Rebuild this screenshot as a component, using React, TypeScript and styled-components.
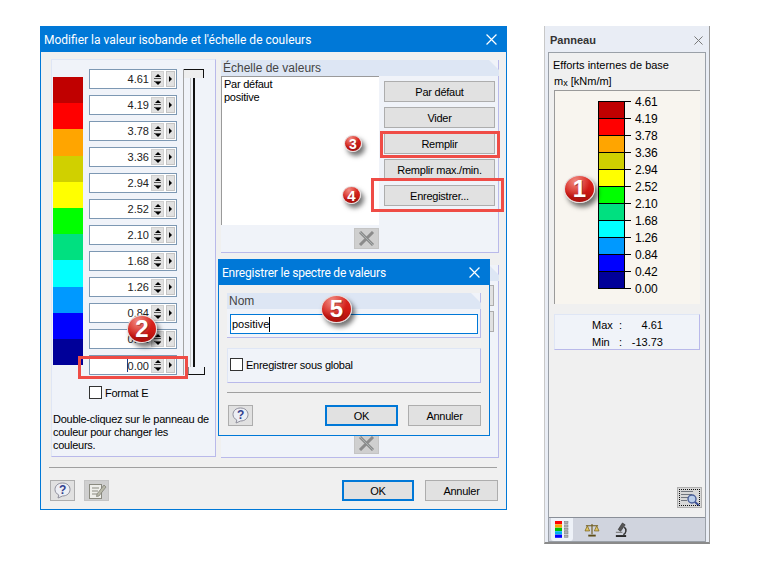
import React from "react";
import styled, { createGlobalStyle } from "styled-components";

const FONT = `"Liberation Sans", Arial, sans-serif`;
const CAPTION_FONT = `Roboto, "Liberation Sans", sans-serif`;
const BLUE = "#0078d7";

const SCALE = ["4.61", "4.19", "3.78", "3.36", "2.94", "2.52", "2.10", "1.68", "1.26", "0.84", "0.42", "0.00"];
const COLORS = ["#c00000", "#ff0000", "#ffa500", "#d0d000", "#ffff00", "#00ff00", "#00e080", "#00ffff", "#0099ff", "#0000ff", "#000099"];

const GlobalStyle = createGlobalStyle`
  html, body {
    margin: 0;
    background: #fff;
  }
  body {
    font-family: ${FONT};
    font-size: 11px;
    color: #000;
  }
`;

const Page = styled.div`
  position: relative;
  width: 760px;
  height: 573px;
  box-sizing: border-box;
  padding: 26px 0 0 40px;
  display: flex;
  align-items: flex-start;
  gap: 37px;
  overflow: hidden;
`;

const Dialog = styled.div`
  position: relative;
  box-sizing: border-box;
  width: 467px;
  height: 484px;
  border: 1px solid ${BLUE};
  background: #f0f0f0;
  letter-spacing: -0.25px;
`;

const SubDialog = styled(Dialog)`
  position: absolute;
  left: 177px;
  top: 232px;
  width: 272px;
  height: 177px;
`;

const TitleBar = styled.div`
  height: 25px;
  background: ${BLUE};
  color: #fff;
  font-family: ${CAPTION_FONT};
  font-size: 12px;
  letter-spacing: 0;
  display: flex;
  align-items: center;
  justify-content: space-between;
  padding: 0 9px 0 3px;
`;

const SubTitleBar = styled(TitleBar)`
  letter-spacing: -0.2px;
`;

const DialogBody = styled.div`
  padding: 7px 7px 0 10px;
`;

const Columns = styled.div`
  display: flex;
  gap: 5px;
`;

const ScalePanel = styled.div`
  box-sizing: border-box;
  width: 165px;
  height: 398px;
  padding: 9px 2px 0 1px;
  background: #f0f3f9;
  border-right: 1px solid #b9b9ea;
  border-bottom: 1px solid #b9b9ea;
  border-top: 1px solid #dfe6f5;
  border-left: 1px solid #dfe6f5;
`;

const ScaleRow = styled.div`
  display: flex;
  align-items: flex-start;
`;

const ColorStack = styled.div`
  width: 30px;
  margin: 8px 6px 0 0;
  display: flex;
  flex-direction: column;
`;

const ColorCell = styled.div<{ $color: string }>`
  height: 26.2px;
  background: ${(p) => p.$color};
`;

const ValueList = styled.div`
  display: flex;
  flex-direction: column;
  gap: 6px;
  margin-right: 6px;
`;

const ValueField = styled.div`
  box-sizing: border-box;
  width: 88px;
  height: 20px;
  border: 1px solid #7d98b3;
  background: #fff;
  display: flex;
  align-items: center;
  padding-right: 1px;
  gap: 2px;
`;

const ValueText = styled.span`
  flex: 1;
  text-align: right;
  letter-spacing: 0;
  color: #222;
`;

const ValueCaret = styled.i`
  display: inline-block;
  width: 1px;
  height: 13px;
  vertical-align: -2px;
  background: #1a3f8a;
`;

const SpinBox = styled.div`
  box-sizing: border-box;
  width: 13px;
  height: 16px;
  background: #e1e1e1;
  border: 1px solid #d0d0d0;
  display: flex;
  flex-direction: column;
  align-items: center;
  justify-content: center;
`;

const SpinUp = styled.i`
  width: 0;
  height: 0;
  border-left: 3px solid transparent;
  border-right: 3px solid transparent;
  border-bottom: 3px solid #000;
`;

const SpinDown = styled.i`
  width: 0;
  height: 0;
  border-left: 3px solid transparent;
  border-right: 3px solid transparent;
  border-top: 3px solid #000;
`;

const SpinRule = styled.i<{ $gap: number }>`
  width: 7px;
  height: 1px;
  margin-top: ${(p) => p.$gap}px;
  background: #555;
`;

const NextBox = styled.div`
  box-sizing: border-box;
  width: 9px;
  height: 16px;
  background: #e1e1e1;
  border: 1px solid #c4c4c4;
  display: flex;
  align-items: center;
  justify-content: center;
`;

const NextArrow = styled.i`
  width: 0;
  height: 0;
  border-top: 3px solid transparent;
  border-bottom: 3px solid transparent;
  border-left: 3px solid #000;
`;

const SliderTrack = styled.div`
  position: relative;
  box-sizing: border-box;
  width: 21px;
  height: 306px;
  border-left: 1px solid #a3a3a3;

  &::before {
    content: "";
    position: absolute;
    left: 6px;
    top: 0;
    bottom: 0;
    width: 1px;
    background: #c4c4c4;
  }

  &::after {
    content: "";
    position: absolute;
    left: 9px;
    top: 0;
    bottom: 0;
    width: 2px;
    background: #111;
  }
`;

const SliderTop = styled.div`
  position: absolute;
  z-index: 1;
  left: 0;
  top: 0;
  width: 19px;
  height: 8px;
  background: #eeeeee;
  border-top: 1px solid #111;
  border-right: 1px solid #111;
`;

const SliderBottom = styled.div`
  position: absolute;
  z-index: 1;
  left: 4px;
  bottom: 0;
  width: 15px;
  height: 7px;
  background: #f0f3f9;
  border-bottom: 1px solid #111;
  border-right: 1px solid #111;
  border-left: 1px solid #888;
`;

const CheckRow = styled.label<{ $left: number; $top: number }>`
  display: flex;
  align-items: center;
  gap: 3px;
  margin: ${(p) => `${p.$top}px 0 0 ${p.$left}px`};
`;

const CheckBox = styled.span`
  box-sizing: border-box;
  width: 13px;
  height: 13px;
  border: 1px solid #333;
  background: #fff;
`;

const Hint = styled.p`
  margin: 14px 0 0;
  line-height: 13px;
`;

const RightColumn = styled.div`
  width: 278px;
  margin-top: 1px;
  display: flex;
  flex-direction: column;
  gap: 12px;
`;

const Group = styled.div<{ $height: number }>`
  box-sizing: border-box;
  height: ${(p) => p.$height}px;
  background: #f0f3f9;
  border-right: 1px solid #b9b9ea;
  border-bottom: 1px solid #b9b9ea;
`;

const GroupHeader = styled.div`
  height: 16px;
  margin-right: -1px;
  background: #dde6f4;
  color: #444;
  padding-left: 2px;
  font-size: 12px;
  letter-spacing: 0;
  line-height: 16px;
  clip-path: polygon(0 0, calc(100% - 10px) 0, 100% 10px, 100% 100%, 0 100%);
`;

const GroupRow = styled.div`
  display: flex;
`;

const ListColumn = styled.div`
  width: 158px;
  display: flex;
  flex-direction: column;
  align-items: flex-end;
  margin-right: 5px;
`;

const ListBox = styled.div`
  box-sizing: border-box;
  width: 100%;
  height: 149px;
  background: #fff;
  border-top: 1px solid #9a9a9a;
  border-left: 1px solid #9a9a9a;
  padding: 1px 2px;
  line-height: 13px;
`;

const ButtonColumn = styled.div`
  display: flex;
  flex-direction: column;
  gap: 5px;
  margin-top: 5px;
`;

const Button = styled.div<{ $width?: number; $primary?: boolean }>`
  box-sizing: border-box;
  width: ${(p) => p.$width ?? 111}px;
  height: 21px;
  background: #e1e1e1;
  border: ${(p) => (p.$primary ? `2px solid ${BLUE}` : "1px solid #adadad")};
  display: flex;
  align-items: center;
  justify-content: center;
`;

const IconButton = styled.div<{ $muted?: boolean; $top?: number }>`
  box-sizing: border-box;
  width: 25px;
  height: 21px;
  margin-top: ${(p) => p.$top ?? 0}px;
  background: ${(p) => (p.$muted ? "#cfcfcf" : "#e1e1e1")};
  border: 1px solid ${(p) => (p.$muted ? "#c4c4c4" : "#adadad")};
  display: flex;
  align-items: center;
  justify-content: center;
  flex: none;
`;

const HiddenGroupRow = styled.div`
  height: 176px;
  display: flex;
  justify-content: space-between;
`;

const StubColumn = styled.div`
  width: 111px;
  margin-left: auto;
  margin-right: 4px;
  display: flex;
  flex-direction: column;
  gap: 5px;
  margin-top: 4px;
`;

const LowerListEnd = styled.div`
  width: 158px;
  margin-top: 152px;
  display: flex;
  justify-content: flex-end;
`;

const Separator = styled.div`
  height: 1px;
  background: #a0a0a0;
`;

const MainSeparator = styled(Separator)`
  margin: 9px 2px 0 -2px;
`;

const Footer = styled.div`
  display: flex;
  align-items: center;
  margin: 12px 1px 0 -1px;
  gap: 9px;
`;

const FooterSpacer = styled.div`
  flex: 1;
`;

const FooterActions = styled.div`
  display: flex;
  gap: 11px;
`;

const SubBody = styled.div`
  padding: 8px 8px 0;
`;

const NameGroup = styled.div`
  box-sizing: border-box;
  height: 45px;
  background: #f0f3f9;
  border-right: 1px solid #b9b9ea;
  border-bottom: 1px solid #b9b9ea;
`;

const NameField = styled.div`
  box-sizing: border-box;
  width: 248px;
  height: 20px;
  margin: 5px 0 0 3px;
  padding-left: 1px;
  background: #fff;
  border: 1px solid ${BLUE};
  display: flex;
  align-items: center;
  letter-spacing: 0;
`;

const Caret = styled.i`
  width: 1px;
  height: 15px;
  background: #000;
`;

const GlobalGroup = styled.div`
  box-sizing: border-box;
  height: 35px;
  margin-top: 10px;
  padding-top: 1px;
  background: #f0f3f9;
  border: 1px solid #dfe6f5;
  border-right-color: #b9b9ea;
  border-bottom-color: #b9b9ea;
`;

const SubSeparator = styled(Separator)`
  margin-top: 9px;
`;

const SubFooter = styled(Footer)`
  margin: 12px 0 0 1px;
`;

const SubActions = styled(FooterActions)`
  gap: 10px;
`;

const SidePanel = styled.div`
  box-sizing: border-box;
  width: 166px;
  height: 518px;
  padding: 0 3px 0 3px;
  background: #e9edf5;
  border-left: 1px solid #c8c8c8;
  border-right: 1px solid #9a9a9a;
  border-bottom: 2px solid #8a8a8a;
  display: flex;
  flex-direction: column;
`;

const SideHeader = styled.div`
  height: 26px;
  display: flex;
  align-items: center;
  justify-content: space-between;
  padding: 2px 3px 0 2px;
  box-sizing: border-box;
  font-size: 11px;
  font-weight: bold;
  color: #333;
`;

const SideBody = styled.div`
  flex: 1;
  background: #f0f0f0;
  border: 1px solid #9aa0a8;
  padding: 4px 5px 0;
  display: flex;
  flex-direction: column;
`;

const SideTitle = styled.div`
  line-height: 16px;
  margin-left: -1px;
`;

const SideUnit = styled.div`
  line-height: 17px;

  sub {
    font-size: 9px;
    line-height: 0;
    vertical-align: -1px;
  }
`;

const LegendBox = styled.div`
  box-sizing: border-box;
  height: 214px;
  padding: 10px 0 0 43px;
  background: #f8f5ef;
  border-top: 1px solid #9a9a9a;
  border-left: 1px solid #9a9a9a;
  display: flex;
  align-items: flex-start;
`;

const LegendBar = styled.div`
  box-sizing: border-box;
  width: 27px;
  border: 1px solid #000;
  border-bottom-width: 0;
`;

const LegendCell = styled.div<{ $color: string }>`
  box-sizing: border-box;
  height: 17px;
  background: ${(p) => p.$color};
  border-bottom: 1px solid #000;
`;

const LegendLabels = styled.div`
  margin-top: -8px;
`;

const LegendLabel = styled.div`
  height: 17px;
  display: flex;
  align-items: center;
  font-size: 12px;
  letter-spacing: -0.2px;

  &::before {
    content: "";
    width: 6px;
    height: 1px;
    margin-right: 4px;
    background: #000;
  }
`;

const Extremes = styled.div`
  box-sizing: border-box;
  height: 36px;
  margin-top: 10px;
  padding: 1px 0 0 37px;
  background: #f0f3f9;
  border: 1px solid #dfe6f5;
  border-right-color: #b9b9ea;
  border-bottom-color: #b9b9ea;
  display: grid;
  grid-template-columns: 27px 8px 36px;
  grid-auto-rows: 17px;
  align-items: center;
`;

const ExtremeValue = styled.span`
  text-align: right;
`;

const SideSpacer = styled.div`
  flex: 1;
`;

const FindButton = styled.div`
  box-sizing: border-box;
  width: 25px;
  height: 21px;
  margin: 0 -2px 9px auto;
  background: #d8d8d8;
  border: 1px solid #b0b0b0;
  outline: 1px dotted #111;
  outline-offset: -3px;
  display: flex;
  align-items: center;
  justify-content: center;
`;

const TabBar = styled.div`
  height: 23px;
  background: #d0d4de;
  border-top: 1px solid #8a8f98;
  margin: 0 -5px;
  display: flex;
  align-items: center;
  padding-left: 2px;
  gap: 7.5px;
`;

const Tab = styled.div<{ $active?: boolean }>`
  width: 22px;
  height: 23px;
  background: ${(p) => (p.$active ? "#eef2f8" : "transparent")};
  border-radius: 0 0 3px 3px;
  display: flex;
  align-items: center;
  justify-content: center;
`;

const Highlight = styled.div<{ $x: number; $y: number; $w: number; $h: number }>`
  position: absolute;
  box-sizing: border-box;
  left: ${(p) => p.$x}px;
  top: ${(p) => p.$y}px;
  width: ${(p) => p.$w}px;
  height: ${(p) => p.$h}px;
  border: 3px solid #ef4c46;
`;

const Badge = styled.div<{ $x: number; $y: number; $w: number; $h: number }>`
  position: absolute;
  box-sizing: border-box;
  left: ${(p) => p.$x}px;
  top: ${(p) => p.$y}px;
  width: ${(p) => p.$w}px;
  height: ${(p) => p.$h}px;
  border-radius: 50%;
  border: 1.5px solid #e6dcdc;
  background:
    radial-gradient(ellipse at 35% 20%, #f08a80 0%, rgba(240, 138, 128, 0) 55%),
    linear-gradient(#dc2a22, #d01a14 55%, #a80f0c);
  box-shadow: 3px 4px 5px rgba(0, 0, 0, 0.55);
  color: #fff;
  font-family: ${FONT};
  font-weight: bold;
  font-size: ${(p) => Math.round(p.$h * 0.85)}px;
  text-shadow: 1px 1px 0 rgba(130, 30, 30, 0.6);
  display: flex;
  align-items: center;
  justify-content: center;
  line-height: 1;
`;

function CloseIcon({ color = "#fff", size = 10 }: { color?: string; size?: number }) {
  return (
    <svg width={size} height={size} viewBox="0 0 10 10">
      <path d="M0.5 0.5 L9.5 9.5 M9.5 0.5 L0.5 9.5" stroke={color} strokeWidth="1.1" fill="none" />
    </svg>
  );
}

function HelpIcon() {
  return (
    <svg width="19" height="17" viewBox="0 0 19 17">
      <path d="M9.5 1 C14 1 17 3.8 17 7.5 C17 11.2 14 14 9.5 14 L5 16 L5.8 13 C3.4 11.8 2 9.8 2 7.5 C2 3.8 5 1 9.5 1 Z" fill="#eceef4" stroke="#8f8f9c" />
      <text x="9.5" y="12" textAnchor="middle" fontFamily={FONT} fontWeight="bold" fontSize="12" fill="#33408f">?</text>
    </svg>
  );
}

function NotesIcon() {
  return (
    <svg width="20" height="18" viewBox="0 0 20 18">
      <rect x="2.5" y="2.5" width="12" height="14" fill="#eeeeea" stroke="#8a8a80" />
      <path d="M5 6h7M5 9h6M5 12h5" stroke="#8a8a80" />
      <path d="M10 12 L17 3 L19 5 L12 14 L9.5 14.5 Z" fill="#b8b8a8" stroke="#7a7a70" strokeWidth="0.7" />
    </svg>
  );
}

function DeleteIcon() {
  return (
    <svg width="17" height="15" viewBox="0 0 17 15">
      <path d="M2 1 L15 14 M15 1 L2 14" stroke="#8b8b8b" strokeWidth="3" />
      <path d="M2 1 L15 14" stroke="#a9b0b0" strokeWidth="1" />
    </svg>
  );
}

function FindIcon() {
  return (
    <svg width="20" height="16" viewBox="0 0 20 16">
      <path d="M1 1.5h12M1 4.5h11M1 7.5h7M1 10.5h6" stroke="#70757d" />
      <circle cx="12" cy="9" r="4" fill="#b9cdea" stroke="#4a5f9a" strokeWidth="1.4" />
      <path d="M15 12 L19 15.5" stroke="#3c4f94" strokeWidth="2" />
    </svg>
  );
}

function BarsIcon() {
  const colors = ["#ff0000", "#ffa500", "#00c000", "#00b0f0", "#0000ff"];
  return (
    <svg width="14" height="17" viewBox="0 0 14 17">
      {colors.map((c, i) => (
        <g key={c}>
          <rect x="0" y={i * 3.4} width="7" height="3.2" fill={c} />
          <rect x="9.5" y={i * 3.4 + 0.5} width="3.5" height="2.2" fill="#b0b0b0" stroke="#777" strokeWidth="0.5" />
        </g>
      ))}
    </svg>
  );
}

function BalanceIcon() {
  return (
    <svg width="16" height="14" viewBox="0 0 17 15">
      <path d="M8.5 1v11M2 3h13" stroke="#6d5a1c" strokeWidth="1.2" />
      <path d="M3.5 3 L1 8.5h5Z M13.5 3 L11 8.5h5Z" fill="#e3c763" stroke="#7a6420" strokeWidth="0.8" />
      <path d="M4.5 13.5h8" stroke="#5c4c18" strokeWidth="2" />
    </svg>
  );
}

function MicroscopeIcon() {
  return (
    <svg width="14" height="17" viewBox="0 0 15 17">
      <path d="M9 1.5 L12 3.5 L7 10.5 L4.5 8.5 Z" fill="#555" stroke="#222" strokeWidth="0.6" />
      <path d="M11 6 C14 8.5 13 12.5 10 14" stroke="#333" strokeWidth="1.6" fill="none" />
      <path d="M2 15.5h11" stroke="#222" strokeWidth="2" />
      <path d="M2 11.5h7" stroke="#777" strokeWidth="1.2" />
    </svg>
  );
}

function ScaleField({ value, active }: { value: string; active?: boolean }) {
  return (
    <ValueField>
      <ValueText>
        {active && <ValueCaret />}
        {value}
      </ValueText>
      <SpinBox>
        <SpinUp />
        <SpinRule $gap={1} />
        <SpinRule $gap={2} />
        <SpinDown />
      </SpinBox>
      <NextBox>
        <NextArrow />
      </NextBox>
    </ValueField>
  );
}

export default function App() {
  return (
    <>
      <GlobalStyle />
      <Page>
        <Dialog>
          <TitleBar>
            Modifier la valeur isobande et l'échelle de couleurs
            <CloseIcon size={11} />
          </TitleBar>
          <DialogBody>
            <Columns>
              <ScalePanel>
                <ScaleRow>
                  <ColorStack>
                    {COLORS.map((c) => (
                      <ColorCell key={c} $color={c} />
                    ))}
                  </ColorStack>
                  <ValueList>
                    {SCALE.map((v) => (
                      <ScaleField key={v} value={v} active={v === "0.00"} />
                    ))}
                  </ValueList>
                  <SliderTrack>
                    <SliderTop />
                    <SliderBottom />
                  </SliderTrack>
                </ScaleRow>
                <CheckRow $left={36} $top={11}>
                  <CheckBox />
                  Format E
                </CheckRow>
                <Hint>
                  Double-cliquez sur le panneau de
                  <br />
                  couleur pour changer les
                  <br />
                  couleurs.
                </Hint>
              </ScalePanel>
              <RightColumn>
                <Group $height={193}>
                  <GroupHeader>Échelle de valeurs</GroupHeader>
                  <GroupRow>
                    <ListColumn>
                      <ListBox>
                        Par défaut
                        <br />
                        positive
                      </ListBox>
                      <IconButton $muted $top={3}>
                        <DeleteIcon />
                      </IconButton>
                    </ListColumn>
                    <ButtonColumn>
                      <Button>Par défaut</Button>
                      <Button>Vider</Button>
                      <Button>Remplir</Button>
                      <Button>Remplir max./min.</Button>
                      <Button>Enregistrer...</Button>
                    </ButtonColumn>
                  </GroupRow>
                </Group>
                <Group $height={193}>
                  <GroupHeader />
                  <HiddenGroupRow>
                    <LowerListEnd>
                      <IconButton $muted>
                        <DeleteIcon />
                      </IconButton>
                    </LowerListEnd>
                    <StubColumn>
                      <Button />
                      <Button />
                    </StubColumn>
                  </HiddenGroupRow>
                </Group>
              </RightColumn>
            </Columns>
            <MainSeparator />
            <Footer>
              <IconButton>
                <HelpIcon />
              </IconButton>
              <IconButton $muted>
                <NotesIcon />
              </IconButton>
              <FooterSpacer />
              <FooterActions>
                <Button $width={72} $primary>
                  OK
                </Button>
                <Button $width={73}>Annuler</Button>
              </FooterActions>
            </Footer>
          </DialogBody>
          <SubDialog>
            <SubTitleBar>
              Enregistrer le spectre de valeurs
              <CloseIcon size={11} />
            </SubTitleBar>
            <SubBody>
              <NameGroup>
                <GroupHeader>Nom</GroupHeader>
                <NameField>
                  positive
                  <Caret />
                </NameField>
              </NameGroup>
              <GlobalGroup>
                <CheckRow $left={2} $top={8}>
                  <CheckBox />
                  Enregistrer sous global
                </CheckRow>
              </GlobalGroup>
              <SubSeparator />
              <SubFooter>
                <IconButton>
                  <HelpIcon />
                </IconButton>
                <FooterSpacer />
                <SubActions>
                  <Button $width={73} $primary>
                    OK
                  </Button>
                  <Button $width={73}>Annuler</Button>
                </SubActions>
              </SubFooter>
            </SubBody>
          </SubDialog>
        </Dialog>
        <SidePanel>
          <SideHeader>
            Panneau
            <CloseIcon color="#777" size={9} />
          </SideHeader>
          <SideBody>
            <SideTitle>Efforts internes de base</SideTitle>
            <SideUnit>
              m<sub>x</sub> [kNm/m]
            </SideUnit>
            <LegendBox>
              <LegendBar>
                {COLORS.map((c) => (
                  <LegendCell key={c} $color={c} />
                ))}
              </LegendBar>
              <LegendLabels>
                {SCALE.map((v) => (
                  <LegendLabel key={v}>{v}</LegendLabel>
                ))}
              </LegendLabels>
            </LegendBox>
            <Extremes>
              <span>Max</span>
              <span>:</span>
              <ExtremeValue>4.61</ExtremeValue>
              <span>Min</span>
              <span>:</span>
              <ExtremeValue>-13.73</ExtremeValue>
            </Extremes>
            <SideSpacer />
            <FindButton>
              <FindIcon />
            </FindButton>
            <TabBar>
              <Tab $active>
                <BarsIcon />
              </Tab>
              <Tab>
                <BalanceIcon />
              </Tab>
              <Tab>
                <MicroscopeIcon />
              </Tab>
            </TabBar>
          </SideBody>
        </SidePanel>
        <Highlight $x={78} $y={356} $w={110} $h={23} />
        <Highlight $x={380} $y={131} $w={120} $h={27} />
        <Highlight $x={371} $y={178} $w={133} $h={34} />
        <Badge $x={564} $y={175} $w={31} $h={28}>1</Badge>
        <Badge $x={127} $y={315} $w={30} $h={28}>2</Badge>
        <Badge $x={344} $y={135} $w={18} $h={17}>3</Badge>
        <Badge $x={342} $y={186} $w={19} $h={18}>4</Badge>
        <Badge $x={321} $y={295} $w={31} $h={28}>5</Badge>
      </Page>
    </>
  );
}
